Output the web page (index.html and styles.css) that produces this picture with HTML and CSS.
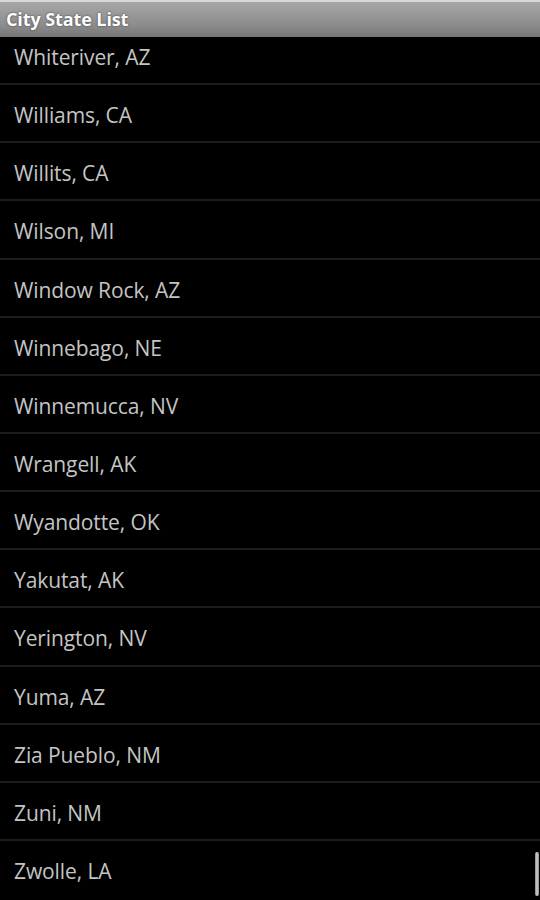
FILE: index.html
```html
<!DOCTYPE html>
<html lang="en">
<head>
    <meta charset="UTF-8">
    <meta name="viewport" content="width=device-width, initial-scale=1.0">
    <title>City State List</title>
    <link rel="stylesheet" href="styles.css">
</head>
<body>
    <div class="screen">
        <div class="title-bar">City State List</div>
        <div class="list-wrap">
            <ul class="city-list">
                <li class="city-item">Whiteriver, AZ</li>
                <li class="city-item">Williams, CA</li>
                <li class="city-item">Willits, CA</li>
                <li class="city-item">Wilson, MI</li>
                <li class="city-item">Window Rock, AZ</li>
                <li class="city-item">Winnebago, NE</li>
                <li class="city-item">Winnemucca, NV</li>
                <li class="city-item">Wrangell, AK</li>
                <li class="city-item">Wyandotte, OK</li>
                <li class="city-item">Yakutat, AK</li>
                <li class="city-item">Yerington, NV</li>
                <li class="city-item">Yuma, AZ</li>
                <li class="city-item">Zia Pueblo, NM</li>
                <li class="city-item">Zuni, NM</li>
                <li class="city-item last">Zwolle, LA</li>
            </ul>
            <div class="scroll-thumb"></div>
        </div>
    </div>
</body>
</html>
```

FILE: styles.css
```css
html, body {
    margin: 0;
    padding: 0;
    background: #000;
}
.screen {
    width: 540px;
    height: 900px;
    display: flex;
    flex-direction: column;
    background: #000;
    font-family: 'Open Sans', 'DejaVu Sans', sans-serif;
}
.title-bar {
    height: 37px;
    box-sizing: border-box;
    padding: 5px 0 0 6px;
    border-top: 2px solid #d8d8d8;
    background: linear-gradient(#a8a8a8, #8a8a8a 70%, #757575);
    color: #fff;
    font-weight: bold;
    font-size: 18px;
    line-height: 24px;
    text-shadow: 0 0 2px #333;
    letter-spacing: -0.1px;
}
.list-wrap {
    flex: 1;
    position: relative;
    overflow: hidden;
}
.city-list {
    list-style: none;
    margin: -10px 0 0 0;
    padding: 0;
}
.city-item {
    height: 58.15px;
    box-sizing: border-box;
    padding: 3px 0 0 14px;
    border-bottom: 2px solid #1c1c1c;
    color: #c4c4c4;
    font-size: 21px;
    line-height: 54px;
    letter-spacing: -0.1px;
}
.city-item.last {
    border-bottom: none;
}
.scroll-thumb {
    position: absolute;
    right: 1px;
    bottom: 4px;
    width: 4px;
    height: 44px;
    border-radius: 2px;
    background: linear-gradient(90deg, #8a8a8a, #d0d0d0 50%, #8a8a8a);
}
```
